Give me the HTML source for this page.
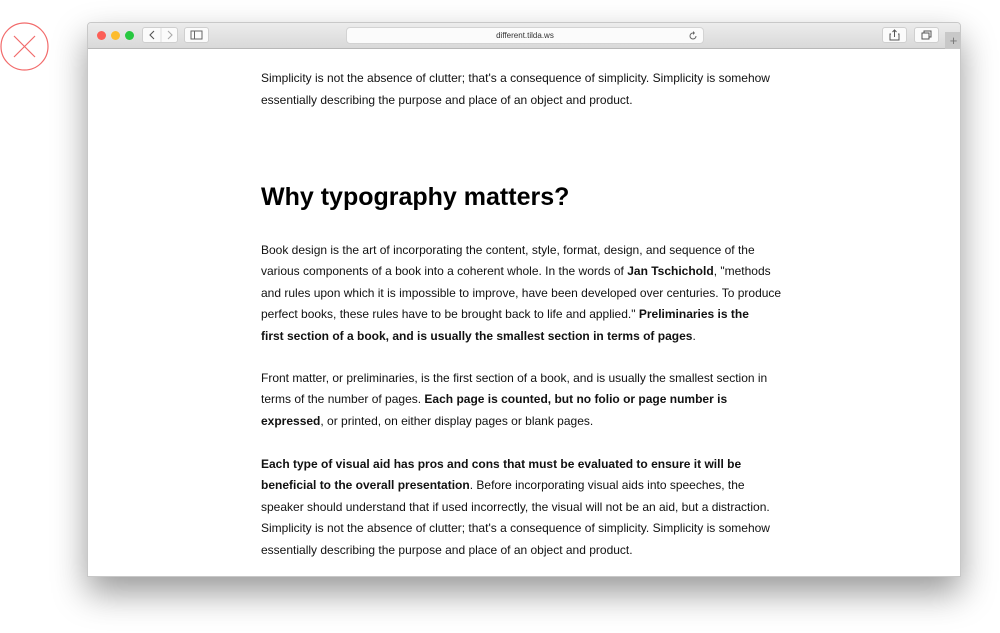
<!DOCTYPE html>
<html><head><meta charset="utf-8"><style>
*{margin:0;padding:0;box-sizing:border-box}
body{width:1000px;height:633px;background:#fff;position:relative;overflow:hidden;font-family:"Liberation Sans",sans-serif}
.win{position:absolute;left:87px;top:22px;width:874px;height:555px;background:#fff;border:1px solid #c8c8c8;border-radius:4px 4px 0 0;box-shadow:0 16px 34px rgba(0,0,0,.4);overflow:hidden}
.tb{position:absolute;left:0;top:0;width:100%;height:26px;background:linear-gradient(#ececec,#d9d9d9);border-bottom:1px solid #b8b8b8}
.dot{position:absolute;top:8px;width:9px;height:9px;border-radius:50%}
.btn{position:absolute;top:4px;height:16px;background:#fbfbfb;border:1px solid #cfcfcf;border-radius:3px}
.url{position:absolute;left:258px;top:4px;width:358px;height:17px;background:#fbfbfb;border:1px solid #d3d3d3;border-radius:4px;font-size:8px;color:#333;text-align:center;line-height:16px}
.t{position:absolute;left:173px;font-size:12px;line-height:21.5px;color:#111;white-space:nowrap}
.t b{font-weight:bold}
h1{position:absolute;left:173px;top:160px;font-size:25px;font-weight:bold;color:#000;white-space:nowrap}
</style></head><body>
<svg style="position:absolute;left:0;top:22px" width="50" height="50"><circle cx="24.5" cy="24.5" r="23.5" fill="none" stroke="#f26b6b" stroke-width="1.2"/><path d="M14 14L35 35M35 14L14 35" stroke="#f26b6b" stroke-width="1.2"/></svg>
<div class="win">
<div class="tb">
<div class="dot" style="left:9px;background:#fc5f57"></div>
<div class="dot" style="left:23px;background:#fdbc2e"></div>
<div class="dot" style="left:37px;background:#28c840"></div>
<div class="btn" style="left:54px;width:36px"><svg width="36" height="14"><path d="M11 3L7 7L11 11" fill="none" stroke="#555" stroke-width="1.1"/><line x1="18" y1="0" x2="18" y2="14" stroke="#ddd"/><path d="M25 3L29 7L25 11" fill="none" stroke="#aaa" stroke-width="1.1"/></svg></div>
<div class="btn" style="left:96px;width:25px"><svg width="23" height="14"><rect x="6" y="3" width="11" height="8" fill="none" stroke="#666"/><line x1="9.5" y1="3" x2="9.5" y2="11" stroke="#666"/></svg></div>
<div class="url">different.tilda.ws<svg style="position:absolute;right:5px;top:3px" width="10" height="10"><path d="M8 5A3 3 0 1 1 5 2" fill="none" stroke="#666"/><path d="M5 0L7 2L5 4" fill="#666"/></svg></div>
<div class="btn" style="left:794px;width:25px"><svg width="23" height="14"><path d="M8 6H7V12H16V6H15M11.5 9V2M9.5 4L11.5 2L13.5 4" fill="none" stroke="#555"/></svg></div>
<div class="btn" style="left:826px;width:25px"><svg width="23" height="14"><rect x="7" y="5" width="7" height="6" fill="none" stroke="#555"/><path d="M9 5V3H16V9H14" fill="none" stroke="#555"/></svg></div>
<div style="position:absolute;left:857px;top:9px;width:17px;height:17px;background:#c8c8c8;color:#777;font-size:13px;text-align:center;line-height:17px">+</div>
</div>
<div class="t" style="top:45px">Simplicity is not the absence of clutter; that's a consequence of simplicity. Simplicity is somehow</div>
<div class="t" style="top:67px">essentially describing the purpose and place of an object and product.</div>
<h1>Why typography matters?</h1>
<div class="t" style="top:217px">Book design is the art of incorporating the content, style, format, design, and sequence of the</div>
<div class="t" style="top:238px">various components of a book into a coherent whole. In the words of <b>Jan Tschichold</b>, "methods</div>
<div class="t" style="top:260px">and rules upon which it is impossible to improve, have been developed over centuries. To produce</div>
<div class="t" style="top:281px">perfect books, these rules have to be brought back to life and applied." <b>Preliminaries is the</b></div>
<div class="t" style="top:303px"><b>first section of a book, and is usually the smallest section in terms of pages</b>.</div>
<div class="t" style="top:345px">Front matter, or preliminaries, is the first section of a book, and is usually the smallest section in</div>
<div class="t" style="top:366px">terms of the number of pages. <b>Each page is counted, but no folio or page number is</b></div>
<div class="t" style="top:388px"><b>expressed</b>, or printed, on either display pages or blank pages.</div>
<div class="t" style="top:431px"><b>Each type of visual aid has pros and cons that must be evaluated to ensure it will be</b></div>
<div class="t" style="top:452px"><b>beneficial to the overall presentation</b>. Before incorporating visual aids into speeches, the</div>
<div class="t" style="top:474px">speaker should understand that if used incorrectly, the visual will not be an aid, but a distraction.</div>
<div class="t" style="top:495px">Simplicity is not the absence of clutter; that's a consequence of simplicity. Simplicity is somehow</div>
<div class="t" style="top:517px">essentially describing the purpose and place of an object and product.</div>
</div>
</body></html>
